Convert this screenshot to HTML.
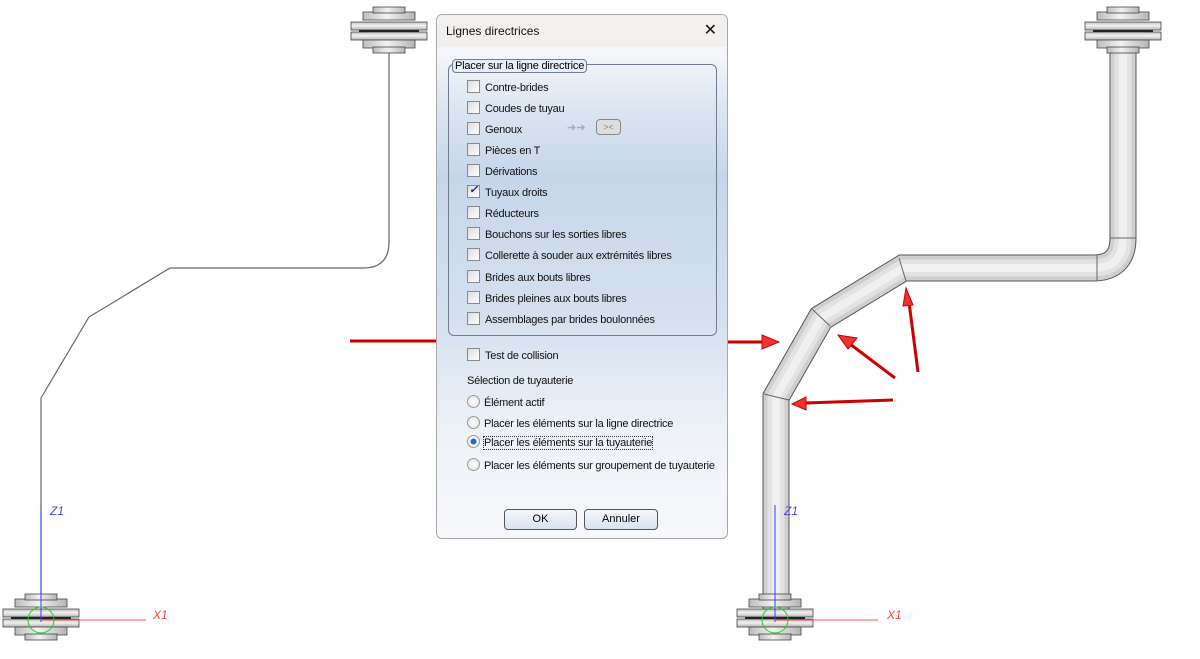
<!DOCTYPE html>
<html><head><meta charset="utf-8"><style>
body{margin:0;width:1200px;height:659px;background:#fff;overflow:hidden;position:relative;font-family:"Liberation Sans",sans-serif}
svg{position:absolute;left:0;top:0}
.dlg{position:absolute;left:436px;top:14px;width:290px;height:523px;border:1px solid #a8a8a8;border-radius:6px;overflow:hidden;background:linear-gradient(#f4f6fa 40px,#dde6f1 90px,#c6d6ea 160px,#d4e0ee 300px,#eef2f8 420px,#f7f8fb 523px)}
.tb{height:32px;background:#f2f0ee;font-size:12px;line-height:32px;padding-left:9px;color:#111;position:relative}
.tb span{position:absolute;right:10px;top:0;font-size:16px}
.grp{position:absolute;left:11px;top:49px;width:267px;height:270px;border:1px solid #6f7d90;border-radius:6px}
.lbl{position:absolute;left:15px;top:44px;font-size:11px;letter-spacing:-.2px;background:#e8eef6;border:1px solid #6f7d90;border-radius:4px;padding:0 2px;line-height:12px}
.it{position:absolute;left:30px;font-size:11px;letter-spacing:-.25px;color:#111;line-height:14px;white-space:nowrap}
.cb{display:inline-block;width:11px;height:11px;border:1px solid #8a8a8a;background:linear-gradient(135deg,#ddd,#fff);vertical-align:-2px;margin-right:5px;position:relative}
.rb{display:inline-block;width:11px;height:11px;border:1px solid #9a9a9a;border-radius:50%;background:radial-gradient(#fff,#ddd);vertical-align:-2px;margin-right:4px;position:relative}
.btn{position:absolute;top:494px;height:19px;border:1px solid #555;border-radius:4px;background:linear-gradient(#f4f7fb,#d9e3ef);font-size:11px;text-align:center;line-height:19px}
</style></head><body>
<svg width="1200" height="659">
<defs>
<linearGradient id="pv" x1="0" x2="1"><stop offset="0" stop-color="#bcbcbc"/><stop offset=".45" stop-color="#f2f2f2"/><stop offset="1" stop-color="#b5b5b5"/></linearGradient>
<linearGradient id="ph" x1="0" x2="0" y1="0" y2="1"><stop offset="0" stop-color="#bcbcbc"/><stop offset=".45" stop-color="#f2f2f2"/><stop offset="1" stop-color="#b5b5b5"/></linearGradient>
<g id="fl">
<rect x="-26" y="-22" width="52" height="8" fill="url(#pv)" stroke="#444" stroke-width=".8"/>
<rect x="-38" y="-12" width="76" height="8" fill="url(#ph)" stroke="#444" stroke-width=".8"/>
<rect x="-38" y="-2" width="76" height="8" fill="url(#ph)" stroke="#444" stroke-width=".8"/>
<rect x="-30" y="-4" width="60" height="2" fill="#222"/>
<rect x="-16" y="-27" width="32" height="6" fill="url(#pv)" stroke="#444" stroke-width=".8"/>
<rect x="-26" y="6" width="52" height="8" fill="url(#pv)" stroke="#444" stroke-width=".8"/>
<rect x="-16" y="13" width="32" height="6" fill="url(#pv)" stroke="#444" stroke-width=".8"/>
</g>
</defs>
<path d="M389 48 V242 Q389 268 363 268 H170 L89 317 L41 398 V610" fill="none" stroke="#666" stroke-width="1.2"/>
<use href="#fl" x="389" y="34"/>
<use href="#fl" x="41" y="621"/>
<line x1="41" y1="505" x2="41" y2="622" stroke="#3a3aff"/>
<line x1="41" y1="620" x2="146" y2="620" stroke="#ff5050"/>
<circle cx="41" cy="620" r="13" fill="none" stroke="#2c2"/>
<text x="50" y="515" font-size="12" font-style="italic" fill="#44f">Z1</text>
<text x="153" y="619" font-size="12" font-style="italic" fill="#f44">X1</text>
<path d="M1123 44 V238 Q1123 268 1093 268 H903 L821 318 L776 397 V610" fill="none" stroke="#555" stroke-width="27"/>
<path d="M1123 44 V238 Q1123 268 1093 268 H903 L821 318 L776 397 V610" fill="none" stroke="#cfcfcf" stroke-width="25"/>
<path d="M1123 44 V238 Q1123 268 1093 268 H903 L821 318 L776 397 V610" fill="none" stroke="#e2e2e2" stroke-width="17"/>
<path d="M1123 44 V238 Q1123 268 1093 268 H903 L821 318 L776 397 V610" fill="none" stroke="#f0f0f0" stroke-width="8"/>
<g stroke="#666" stroke-width="1"><line x1="764" y1="394" x2="789" y2="400"/><line x1="812" y1="309" x2="830" y2="326"/><line x1="899" y1="258" x2="906" y2="281"/><line x1="1097" y1="255" x2="1097" y2="281"/><line x1="1110" y1="238" x2="1136" y2="238"/></g>
<use href="#fl" x="1123" y="34"/>
<use href="#fl" x="775" y="621"/>
<line x1="775" y1="505" x2="775" y2="622" stroke="#3a3aff"/>
<line x1="775" y1="620" x2="878" y2="620" stroke="#ff5050"/>
<circle cx="775" cy="620" r="13" fill="none" stroke="#2c2"/>
<text x="784" y="515" font-size="12" font-style="italic" fill="#44f">Z1</text>
<text x="887" y="619" font-size="12" font-style="italic" fill="#f44">X1</text>
<g stroke="#c00" stroke-width="3" fill="#e33">
<line x1="350" y1="341" x2="440" y2="341"/>
<line x1="726" y1="342" x2="764" y2="342"/><path d="M762 335 L779 342 L762 349Z" stroke-width="1"/>
<line x1="895" y1="378" x2="850" y2="344"/><path d="M838 335 L857 338 L848 349Z" stroke-width="1"/>
<line x1="918" y1="372" x2="909" y2="302"/><path d="M906 288 L913 305 L903 306Z" stroke-width="1"/>
<line x1="893" y1="400" x2="805" y2="403"/><path d="M792 404 L806 397 L806 410Z" stroke-width="1"/>
</g>
</svg>
<div class="dlg">
<div class="tb">Lignes directrices<span>✕</span></div>
<div class="grp"></div>
<div class="lbl">Placer sur la ligne directrice</div>
<div class="it" style="top:65px"><i class="cb"></i>Contre-brides</div>
<div class="it" style="top:86px"><i class="cb"></i>Coudes de tuyau</div>
<div class="it" style="top:107px"><i class="cb"></i>Genoux</div>
<div style="position:absolute;left:130px;top:106px;font-size:11px;color:#aaa">➔➔</div>
<div style="position:absolute;left:159px;top:104px;width:23px;height:14px;border:1px solid #888;border-radius:4px;background:#ddd;font-size:9px;color:#888;text-align:center;line-height:14px">&gt;&lt;</div>
<div class="it" style="top:128px"><i class="cb"></i>Pièces en T</div>
<div class="it" style="top:149px"><i class="cb"></i>Dérivations</div>
<div class="it" style="top:170px"><i class="cb"><b style="position:absolute;left:1px;top:-3px;font-size:11px;color:#1a1a9a">✓</b></i>Tuyaux droits</div>
<div class="it" style="top:191px"><i class="cb"></i>Réducteurs</div>
<div class="it" style="top:212px"><i class="cb"></i>Bouchons sur les sorties libres</div>
<div class="it" style="top:233px"><i class="cb"></i>Collerette à souder aux extrémités libres</div>
<div class="it" style="top:255px"><i class="cb"></i>Brides aux bouts libres</div>
<div class="it" style="top:276px"><i class="cb"></i>Brides pleines aux bouts libres</div>
<div class="it" style="top:297px"><i class="cb"></i>Assemblages par brides boulonnées</div>
<div class="it" style="top:333px"><i class="cb"></i>Test de collision</div>
<div class="it" style="top:359px">Sélection de tuyauterie</div>
<div class="it" style="top:380px"><i class="rb"></i>Élément actif</div>
<div class="it" style="top:401px"><i class="rb"></i>Placer les éléments sur la ligne directrice</div>
<div class="it" style="top:420px"><i class="rb" style="background:radial-gradient(#1a6fc0 2.5px,#fff 3.5px,#ddd)"></i><span style="outline:1px dotted #333">Placer les éléments sur la tuyauterie</span></div>
<div class="it" style="top:443px"><i class="rb"></i>Placer les éléments sur groupement de tuyauterie</div>
<div class="btn" style="left:67px;width:71px">OK</div>
<div class="btn" style="left:147px;width:72px">Annuler</div>
</div>
</body></html>
